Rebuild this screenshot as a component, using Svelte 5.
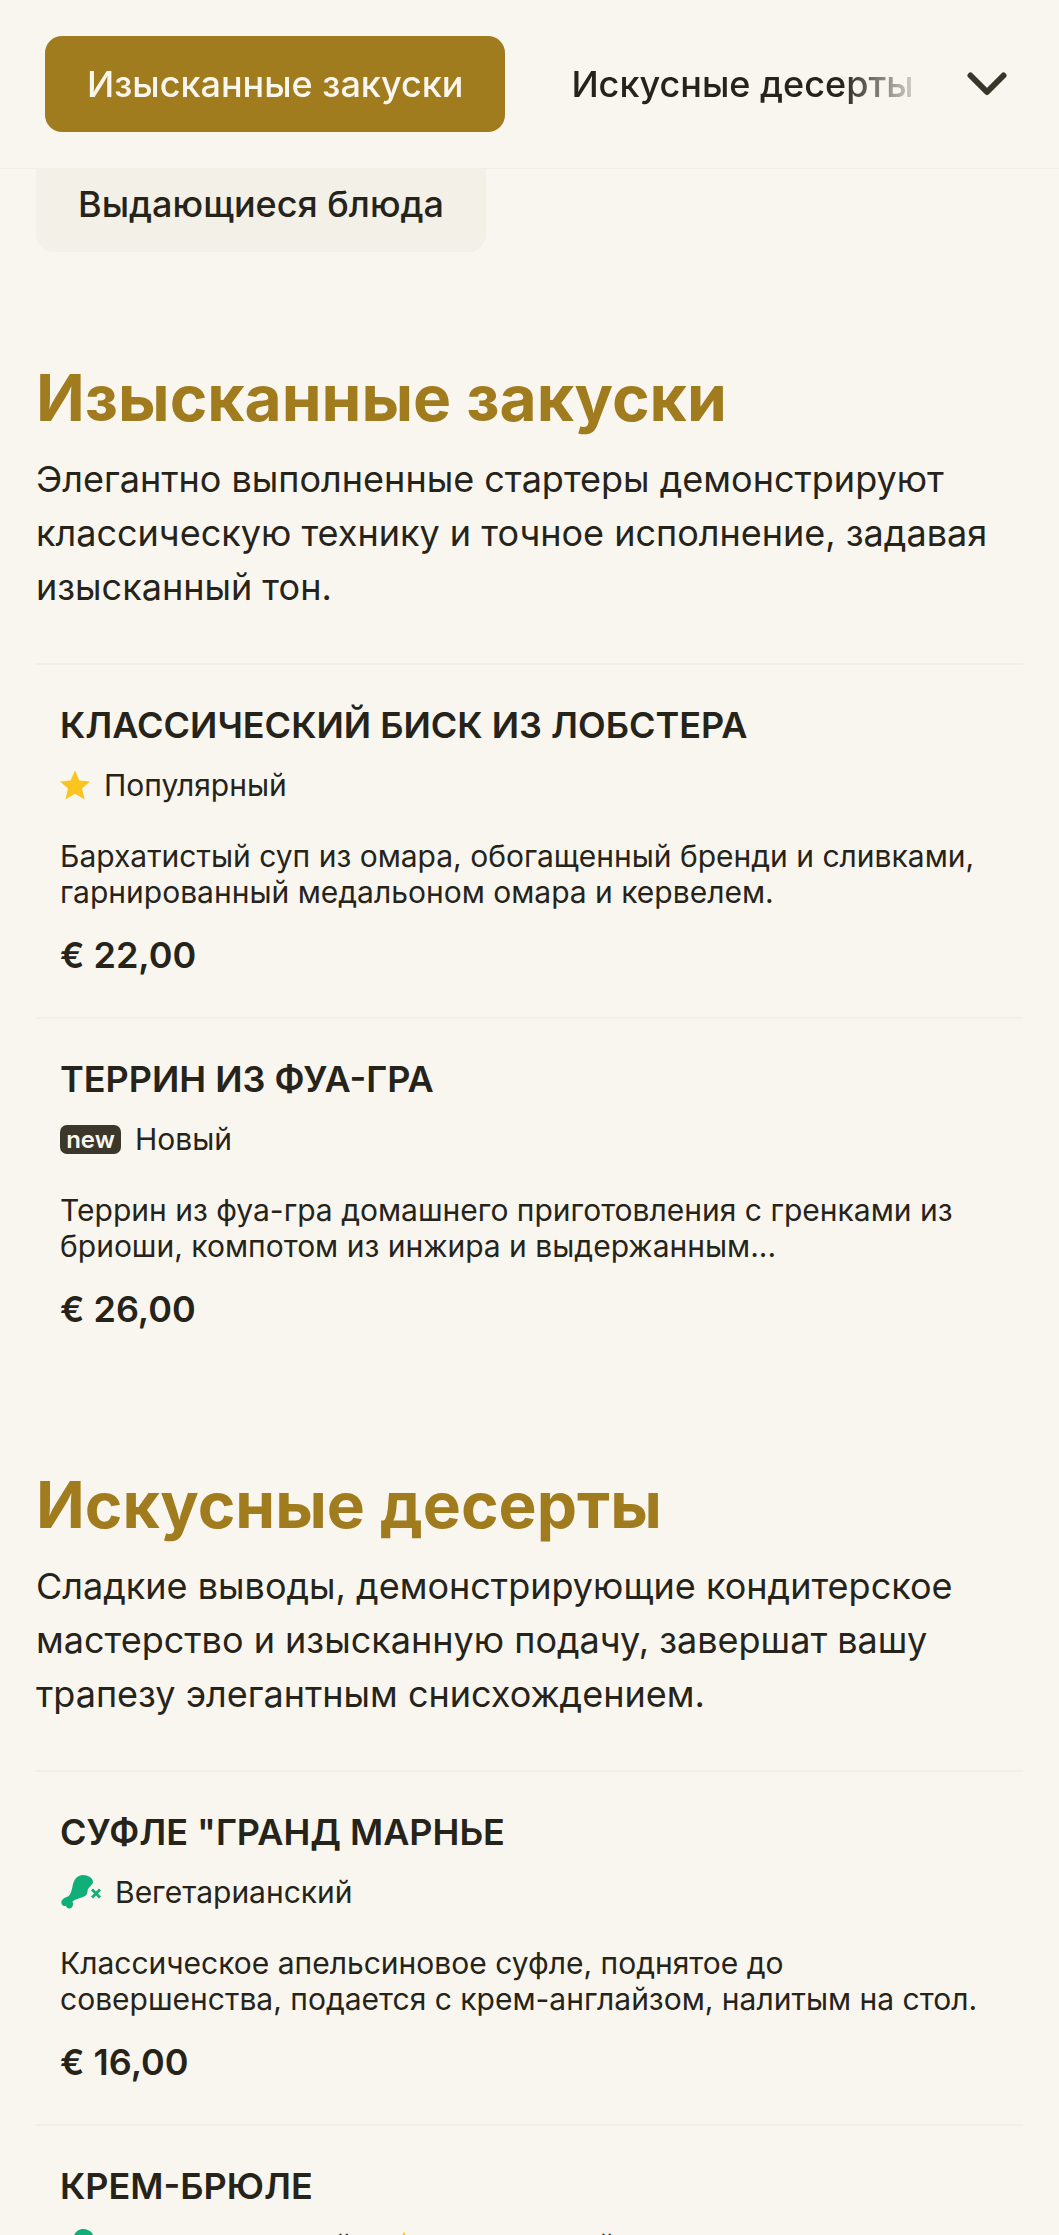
<script>
	const sections = [
		{
			title: 'Изысканные закуски',
			text: 'Элегантно выполненные стартеры демонстрируют классическую технику и точное исполнение, задавая изысканный тон.',
			items: [
				{
					name: 'Классический биск из лобстера',
					tags: ['popular'],
					desc: 'Бархатистый суп из омара, обогащенный бренди и сливками, гарнированный медальоном омара и кервелем.',
					price: '€ 22,00'
				},
				{
					name: 'Террин из фуа-гра',
					tags: ['new'],
					desc: 'Террин из фуа-гра домашнего приготовления с гренками из бриоши, компотом из инжира и выдержанным...',
					price: '€ 26,00'
				}
			]
		},
		{
			title: 'Искусные десерты',
			text: 'Сладкие выводы, демонстрирующие кондитерское мастерство и изысканную подачу, завершат вашу трапезу элегантным снисхождением.',
			items: [
				{
					name: 'Суфле "Гранд Марнье',
					tags: ['veg'],
					desc: 'Классическое апельсиновое суфле, поднятое до совершенства, подается с крем-англайзом, налитым на стол.',
					price: '€ 16,00'
				},
				{
					name: 'Крем-брюле',
					tags: ['veg', 'popular'],
					desc: 'Классический заварной крем с ванилью и карамельной корочкой.',
					price: '€ 14,00'
				}
			]
		}
	];

	const tagLabels = { popular: 'Популярный', new: 'Новый', veg: 'Вегетарианский' };
</script>

<div class="page">
	<header class="tabs">
		<div class="tabs-scroll">
			<button class="tab active">Изысканные закуски</button>
			<button class="tab">Искусные десерты</button>
		</div>
		<button class="expand" aria-label="Показать все">
			<svg viewBox="0 0 40 24" width="40" height="24">
				<path d="M3.5 3.5 L20 20 L36.5 3.5" fill="none" stroke="#38352a" stroke-width="6" stroke-linecap="round" stroke-linejoin="round" />
			</svg>
		</button>
	</header>

	<div class="more-tabs">
		<button class="tab more">Выдающиеся блюда</button>
	</div>

	{#each sections as section}
		<section class="section">
			<h2>{section.title}</h2>
			<p class="intro">{section.text}</p>
			<div class="items">
				{#each section.items as item}
					<article class="item">
						<h3>{item.name}</h3>
						<div class="tags">
							{#each item.tags as tag}
								<span class="tag">
									{#if tag === 'popular'}
										<svg class="star" viewBox="0 0 30 30" width="30" height="30">
											<path d="M15 0.5 L19.4 10.6 L30 11.4 L22 18.6 L24.6 29.5 L15 23.8 L5.4 29.5 L8 18.6 L0 11.4 L10.6 10.6 Z" fill="#fbc41f" />
										</svg>
									{:else if tag === 'new'}
										<span class="new">new</span>
									{:else}
										<svg class="veg" viewBox="0 0 41 35" width="41" height="35">
											<path d="M23 0 C28 0 33 3 33 7 C33 10 28 12 27.5 16 C27.5 19 26 21 23 22 C19 23.5 15 24 12.5 26.5 C14 30 12 34 9 33.5 C7.5 33.3 6.5 32.3 6 31 C3 31.5 0.5 29 1.5 26 C2.5 23.5 5 22.5 8 21.5 C10.5 20 11.5 16 12.5 11.5 C13.5 5 17 0 23 0 Z" fill="#10ae78" />
											<path d="M32 14.5 L40 22.5 M40 14.5 L32 22.5" stroke="#10ae78" stroke-width="2.8" fill="none" />
										</svg>
									{/if}
									{tagLabels[tag]}
								</span>
							{/each}
						</div>
						<p class="desc">{item.desc}</p>
						<div class="price">{item.price}</div>
					</article>
				{/each}
			</div>
		</section>
	{/each}
</div>

<style>
	:global(body) {
		margin: 0;
		background: #f9f6ef;
	}

	.page {
		height: 2235px;
		overflow: hidden;
		background: #f9f6ef;
		color: #26241a;
		font-family: Inter, 'Noto Sans', sans-serif;
	}

	button {
		font-family: inherit;
		border: 0;
		background: none;
		color: inherit;
		padding: 0;
	}

	.tabs {
		position: relative;
		z-index: 1;
		display: flex;
		align-items: center;
		height: 169px;
		padding-left: 45px;
		padding-right: 52px;
		border-bottom: 1px solid #f2efe6;
		box-sizing: border-box;
		background: #f9f6ef;
	}

	.tabs-scroll {
		display: flex;
		align-items: center;
		gap: 24px;
		width: 885px;
		overflow: hidden;
		mask-image: linear-gradient(to right, #000 90%, transparent 100%);
	}

	.tab {
		flex: none;
		height: 96px;
		padding: 0 42px;
		border-radius: 17px;
		font-size: 36px;
		font-weight: 500;
		line-height: 48px;
		white-space: nowrap;
	}

	.tab.active {
		background: #a07c1e;
		color: #f9f6ef;
	}

	.expand {
		display: flex;
		margin-left: auto;
	}

	.more-tabs {
		margin-top: -13px;
		padding: 0 36px;
	}

	.tab.more {
		background: #f3f1e7;
	}

	.section {
		padding: 0 36px;
		margin-top: 106px;
	}

	.section + .section {
		margin-top: 94px;
	}

	h2 {
		margin: 0;
		font-size: 64px;
		line-height: 80px;
		font-weight: 700;
		color: #a07c1e;
	}

	.intro {
		margin: 14px 0 0;
		font-size: 36px;
		line-height: 54px;
	}

	.items {
		margin-top: 49px;
	}

	.item {
		padding: 37px 24px 39px;
		border-top: 2px solid #f2efe6;
	}

	h3 {
		margin: 0;
		font-size: 36px;
		line-height: 46px;
		font-weight: 600;
		text-transform: uppercase;
	}

	.tags {
		display: flex;
		gap: 36px;
		margin-top: 17px;
		height: 40px;
		align-items: center;
	}

	.tag {
		display: flex;
		align-items: center;
		gap: 14px;
		font-size: 30px;
	}

	.new {
		background: #3b382b;
		color: #f9f6ef;
		font-size: 24px;
		font-weight: 600;
		line-height: 29px;
		width: 61px;
		text-align: center;
		border-radius: 7px;
	}

	.desc {
		margin: 34px 0 0;
		font-size: 30px;
		line-height: 35.5px;
	}

	.price {
		margin-top: 22px;
		font-size: 36px;
		line-height: 46px;
		font-weight: 600;
	}
</style>
